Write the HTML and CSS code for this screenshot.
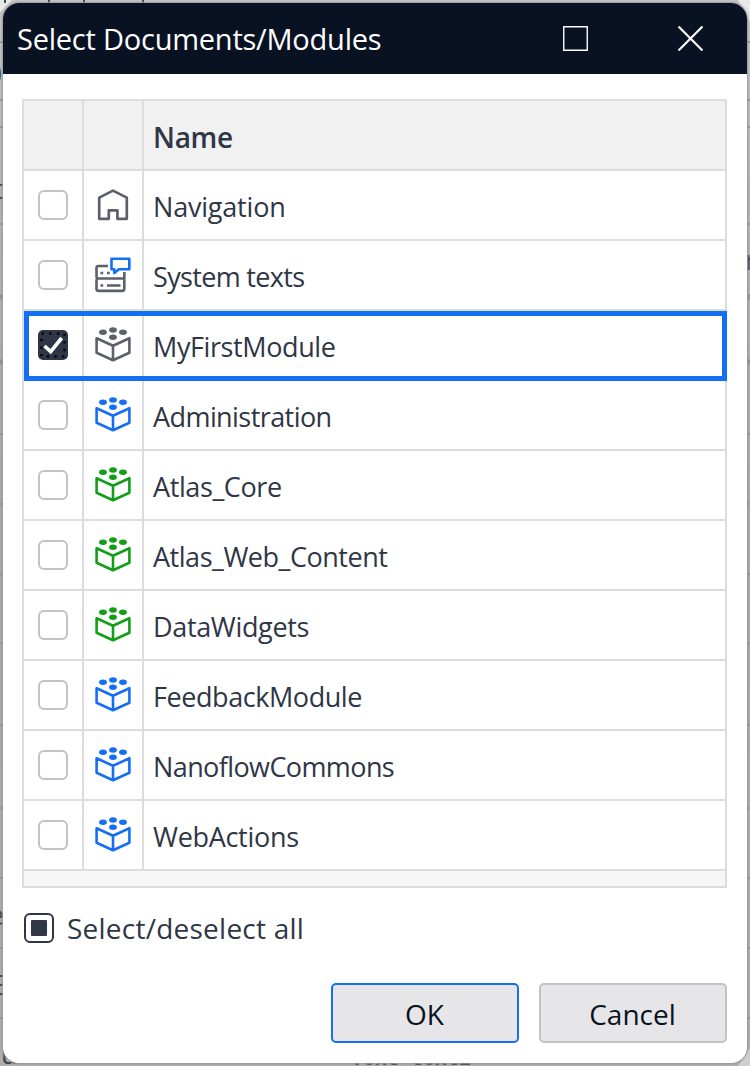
FILE: index.html
```html
<!DOCTYPE html>
<html lang="en">
<head>
<meta charset="utf-8">
<title>Select Documents/Modules</title>
<link rel="stylesheet" href="styles.css">
</head>
<body>
<svg class="backdrop" width="750" height="1066" viewBox="0 0 750 1066" aria-hidden="true">
  <defs>
    <linearGradient id="shade" x1="0" y1="0" x2="0" y2="1">
      <stop offset="0" stop-color="#c6c6c6"/><stop offset=".18" stop-color="#b3b3b3"/>
      <stop offset=".5" stop-color="#a7a7a7"/><stop offset="1" stop-color="#adadad"/>
    </linearGradient>
  </defs>
  <rect width="750" height="1066" fill="url(#shade)"/>
  <path d="M0 0h12L0 12zM738 0h12v22z" fill="#e8e8e8"/>
  <path d="M738 1066h12v-18z" fill="#cfcfcf"/>
  <path d="M0 42h750M0 100h750M0 127h750M0 224h750M0 434h750M0 504h750M0 574h750M0 643h750M0 725h750M0 808h750M0 878h750M0 948h750M0 1018h750" stroke="#969698" stroke-width="2"/>
  <path d="M0 297h750M0 362h750" stroke="#909094" stroke-width="5"/>
  <path d="M5 3V0M49 3V0M84 3V0M143 3V0M0 976h4M0 985h4M0 994h4" stroke="#3f434d" stroke-width="2"/>
  <g class="behind-text">
    <text x="-6" y="82">)</text><text x="-6" y="199">t</text>
    <text x="-11" y="925">e</text><text x="1" y="1064">u</text><text x="745" y="270">r</text>
    <text class="behind-code" x="351" y="1065">Text text2</text>
  </g>
</svg>
<svg class="symbols" aria-hidden="true">
  <symbol id="module" viewBox="0 0 36 36">
    <path d="M1.6 11.2 18 18.8 34.4 11.2V25.8L18 33.2 1.6 25.8ZM18 18.8V33.2" fill="none" stroke="currentColor" stroke-width="2.6" stroke-linejoin="round"/>
    <g fill="currentColor"><ellipse cx="18" cy="3" rx="3.9" ry="2.7"/><ellipse cx="8" cy="5.3" rx="3.9" ry="2.7"/><ellipse cx="28" cy="5.3" rx="3.9" ry="2.7"/><ellipse cx="18" cy="10.3" rx="3.9" ry="2.7"/></g>
  </symbol>
  <symbol id="home" viewBox="0 0 36 36">
    <path d="M4.2 10.6 18 3.6 31.8 10.6V31.8H22.4V23.4H13.8V31.8H4.2Z" fill="none" stroke="currentColor" stroke-width="2.7" stroke-linejoin="round"/>
  </symbol>
  <symbol id="texts" viewBox="0 0 36 36">
    <g fill="none" stroke="currentColor" stroke-width="2.6" stroke-linejoin="round">
      <path d="M13 9H3.4Q1.5 9 1.5 11V19.5Q1.5 21.5 3.4 21.5H29.3V15M3.4 21.5Q1.5 21.5 1.5 23.5V31.8Q1.5 33.9 3.4 33.9H27.4Q29.3 33.9 29.3 31.8V21.5M12 28.5H25.5M5.5 28.5H8.2M5.5 16H8.2M12 16H14.7"/>
      <path class="speech" d="M16.5 1.7H34.3V12.2H24L19.3 16V12.2H16.5Z"/>
    </g>
  </symbol>
</svg>

<main class="dialog">
  <header class="titlebar">
    <h1 class="title">Select Documents/Modules</h1>
    <svg class="window-icon maximize" width="25" height="25" viewBox="0 0 25 25"><path d="M.75.75h23.5v23.5H.75z" fill="none" stroke="#fff" stroke-width="1.4"/></svg>
    <svg class="window-icon close" width="25" height="25" viewBox="0 0 25 25"><path d="m.5.5 24 24m0-24-24 24" stroke="#fff" stroke-width="2.2"/></svg>
  </header>
  <section class="content">
    <div class="grid">
      <div class="row head"><span class="cell"></span><span class="cell"></span><span class="name"><b class="t-name">Name</b></span></div>
      <div class="row"><span class="cell"><i class="box"></i></span><span class="cell gray"><svg class="icon"><use href="#home"/></svg></span><span class="name"><span class="t-nav">Navigation</span></span></div>
      <div class="row"><span class="cell"><i class="box"></i></span><span class="cell gray"><svg class="icon"><use href="#texts"/></svg></span><span class="name"><span class="t-sys">System texts</span></span></div>
      <div class="row selected"><span class="cell"><svg class="checked" width="30" height="30" viewBox="0 0 30 30"><rect width="30" height="30" rx="5" fill="#2f3646"/><rect x="3.5" y="3.5" width="23" height="23" fill="none" stroke="#050608" stroke-width="2.4" stroke-dasharray="2.4 5.27"/><path d="m6.5 16 6.2 5.7L23.7 8" fill="none" stroke="#fff" stroke-width="3.6"/></svg></span><span class="cell gray"><svg class="icon"><use href="#module"/></svg></span><span class="name"><span class="t-my">MyFirstModule</span></span></div>
      <div class="row"><span class="cell"><i class="box"></i></span><span class="cell blue"><svg class="icon"><use href="#module"/></svg></span><span class="name"><span class="t-admin">Administration</span></span></div>
      <div class="row"><span class="cell"><i class="box"></i></span><span class="cell green"><svg class="icon"><use href="#module"/></svg></span><span class="name"><span class="t-core">Atlas_Core</span></span></div>
      <div class="row"><span class="cell"><i class="box"></i></span><span class="cell green"><svg class="icon"><use href="#module"/></svg></span><span class="name"><span class="t-web">Atlas_Web_Content</span></span></div>
      <div class="row"><span class="cell"><i class="box"></i></span><span class="cell green"><svg class="icon"><use href="#module"/></svg></span><span class="name"><span class="t-data">DataWidgets</span></span></div>
      <div class="row"><span class="cell"><i class="box"></i></span><span class="cell blue"><svg class="icon"><use href="#module"/></svg></span><span class="name"><span class="t-feed">FeedbackModule</span></span></div>
      <div class="row"><span class="cell"><i class="box"></i></span><span class="cell blue"><svg class="icon"><use href="#module"/></svg></span><span class="name"><span class="t-nano">NanoflowCommons</span></span></div>
      <div class="row"><span class="cell"><i class="box"></i></span><span class="cell blue"><svg class="icon"><use href="#module"/></svg></span><span class="name"><span class="t-act">WebActions</span></span></div>
      <div class="grid-foot"></div>
    </div>
    <label class="select-all"><i class="box mixed"></i><span class="t-all">Select/deselect all</span></label>
    <footer class="actions"><button class="button primary">OK</button><button class="button">Cancel</button></footer>
  </section>
</main>
</body>
</html>
```
FILE: styles.css
```css
*, *::before, *::after { box-sizing: border-box; }
body { margin: 0; width: 750px; height: 1066px; padding: 3px; overflow: hidden; font: 27px/36px "Open Sans", "Noto Sans", sans-serif; color: #2f3646; }
.backdrop { position: absolute; left: 0; top: 0; z-index: -1; }
.behind-text { font-size: 27px; fill: #3f434d; }
.behind-code { font: bold 20px "Liberation Mono", monospace; }
.symbols { position: absolute; width: 0; height: 0; }
.dialog { width: 744px; height: 1060px; border-radius: 16px; overflow: hidden; background: #fff; box-shadow: 0 0 2px 1px #999; }
.titlebar { display: flex; align-items: center; height: 71px; padding: 0 44px 0 14px; background: #091222; color: #fff; }
.title { margin: 0; flex: 1; font-size: 29px; font-weight: 400; line-height: 40px; white-space: nowrap; letter-spacing: -.23px; }
.window-icon { display: block; flex: none; }
.close { margin-left: 90px; }
.content { padding: 25px 20px 0 19px; }
.grid { height: 789px; border: 2px solid #dbdcdd; display: flex; flex-direction: column; }
.row { position: relative; display: grid; grid-template-columns: 60px 60px 1fr; height: 70px; flex: none; border-bottom: 2px solid #dbdcdd; }
.head { background: #f1f1f1; }
.cell { display: flex; align-items: center; justify-content: center; border-right: 2px solid #dbdcdd; }
.name { display: flex; align-items: center; padding: 3px 0 0 9px; white-space: nowrap; }
.name > * { display: block; }
.t-name { font-size: 28px; font-weight: 600; letter-spacing: -.3px; }
.t-nav { letter-spacing: -.2px; }
.t-sys { letter-spacing: -.67px; }
.t-my { letter-spacing: -.4px; }
.t-admin { letter-spacing: -.57px; }
.t-core { letter-spacing: -.4px; }
.t-web { letter-spacing: -.47px; }
.t-data { letter-spacing: -.34px; }
.t-feed { letter-spacing: -.43px; }
.t-nano { letter-spacing: -.6px; }
.t-act { letter-spacing: -.3px; }
.t-all { letter-spacing: .24px; }
.box { display: block; width: 30px; height: 30px; border: 2px solid #c2c2c9; border-radius: 6px; background: #fff; }
.icon { display: block; width: 36px; height: 36px; }
.gray { color: #5b606c; }
.blue { color: #146ff5; }
.green { color: #129e17; }
.speech { stroke: #146ff5; }
.selected::after { content: ""; position: absolute; left: 0; right: -2px; top: 0; height: 70px; border: 5px solid #146ff5; z-index: 1; }
.grid-foot { flex: 1; background: #f6f6f6; }
.select-all { display: flex; align-items: center; gap: 13px; margin: 22px 0 0 2px; height: 36px; font-size: 28px; }
.mixed { border-color: #2f3646; padding: 5px; }
.mixed::before { content: ""; display: block; width: 16px; height: 16px; border-radius: 1px; background: #2f3646; }
.actions { display: flex; justify-content: flex-end; gap: 20px; margin-top: 37px; }
.button { width: 188px; height: 60px; padding: 1px 1px 0 0; border: 2px solid #c2c2c9; border-radius: 5px; background: #e6e6e9; font: 28px/36px "Open Sans", "Noto Sans", sans-serif; color: #091222; }
.primary { border-color: #146ff5; }
```
